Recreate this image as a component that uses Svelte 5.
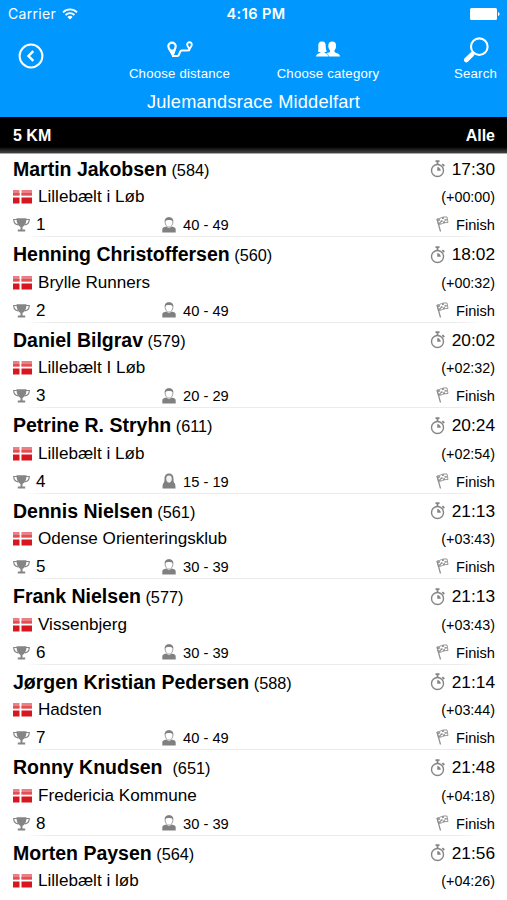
<script lang="ts">
  type Runner = {
    name: string
    bib: number
    club: string
    age?: string
    female?: boolean
    time: string
    gap: string
  }

  const runners: Runner[] = [
    { name: 'Martin Jakobsen', bib: 584, club: 'Lillebælt i Løb', age: '40 - 49', time: '17:30', gap: '+00:00' },
    { name: 'Henning Christoffersen', bib: 560, club: 'Brylle Runners', age: '40 - 49', time: '18:02', gap: '+00:32' },
    { name: 'Daniel Bilgrav', bib: 579, club: 'Lillebælt I Løb', age: '20 - 29', time: '20:02', gap: '+02:32' },
    { name: 'Petrine R. Stryhn', bib: 611, club: 'Lillebælt i Løb', age: '15 - 19', female: true, time: '20:24', gap: '+02:54' },
    { name: 'Dennis Nielsen', bib: 561, club: 'Odense Orienteringsklub', age: '30 - 39', time: '21:13', gap: '+03:43' },
    { name: 'Frank Nielsen', bib: 577, club: 'Vissenbjerg', age: '30 - 39', time: '21:13', gap: '+03:43' },
    { name: 'Jørgen Kristian Pedersen', bib: 588, club: 'Hadsten', age: '40 - 49', time: '21:14', gap: '+03:44' },
    { name: 'Ronny Knudsen ', bib: 651, club: 'Fredericia Kommune', age: '30 - 39', time: '21:48', gap: '+04:18' },
    { name: 'Morten Paysen', bib: 564, club: 'Lillebælt i løb', time: '21:56', gap: '+04:26' },
  ]
</script>

<div class="screen">
  <header>
    <div class="status">
      <div class="carrier">
        <span>Carrier</span>
        <svg width="16" height="12" viewBox="0 0 16 12" fill="none" stroke="#fff" stroke-width="1.8">
          <path d="M1 4.3a10 10 0 0 1 14 0M3.6 7a6.3 6.3 0 0 1 8.8 0" />
          <path d="M5.4 9a3.8 3.8 0 0 1 5.2 0L8 11.6z" fill="#fff" stroke="none" />
        </svg>
      </div>
      <div class="clock">4:16 PM</div>
      <svg class="battery" width="30" height="12" viewBox="0 0 30 12" fill="#fff">
        <rect width="27" height="12" rx="1.5" />
        <path d="M28 4q1.6.4 1.6 2T28 8z" />
      </svg>
    </div>
    <nav>
      <button class="back" aria-label="Back">
        <svg width="26" height="26" viewBox="0 0 26 26" fill="none" stroke="#fff" stroke-width="2">
          <circle cx="13" cy="13" r="11.4" />
          <path d="M15.3 8.2L10.5 13l4.8 4.8" stroke-width="2.4" />
        </svg>
      </button>
      <button class="distance">
        <svg width="26" height="17" viewBox="0 0 26 17" fill="none" stroke="#fff">
          <path d="M5 1.6a3.700 3.700 0 0 1 3.700 3.700c0 2.400-2.200 4.500-3.200 8C4.200 10.500 1.300 7.700 1.300 5.300A3.700 3.700 0 0 1 5 1.600z" stroke-width="2.200" />
          <path d="M2.500 9L6 15.700 8.200 9z" fill="#fff" />
          <path d="M5.500 15H10.500q1 0 1.500-1.400l1.200-3q.4-1 1.600-1H20.500q1.500 0 1.800-1.500" stroke-width="2" />
          <path d="M22.500 1.200a2.300 2.300 0 0 1 2.300 2.500c0 1.500-1.600 2.700-2.300 4.500-.7-1.800-2.300-3-2.300-4.500a2.300 2.300 0 0 1 2.300-2.500z" stroke-width="1.900" />
        </svg>
        <span>Choose distance</span>
      </button>
      <button class="category">
        <svg width="24" height="16" viewBox="0 0 24 16" fill="#fff">
          <path d="M16.300.5c2.700 0 4 1.700 3.800 4.600-.1 2.300-.9 3.300-1.600 4.200v1.500c0 1.400 5.500 1.300 5.500 4.700H12.800c-.2-1.900-1.200-2.700-2.400-3.200 1.700-.7 3.500-.8 3.500-1.500V9.300c-.8-.9-1.500-2-1.600-4.200C12.200 2.200 13.500.5 16.300.5z" />
          <path d="M6 .5c3 0 3.700 2 3.700 4.500 0 2 .3 4 1.100 5.500-.8.4-1.700.5-2.400.5 0 1.400 3.600 1.200 3.900 4.500H0c.3-3.300 4.500-3.300 4.500-4.600-.8 0-1.800-.1-2.600-.5C2.600 8.800 2.300 7 2.300 5 2.300 2.500 3 .5 6 .5z" />
        </svg>
        <span>Choose category</span>
      </button>
      <button class="search">
        <svg width="26" height="26" viewBox="0 0 26 26" fill="none" stroke="#fff">
          <circle cx="16.300" cy="9.700" r="8.300" stroke-width="2.100" />
          <path d="M10.500 15.800l-1.800 1.900" stroke-width="2" />
          <path d="M9 17.300L3.300 23" stroke-width="4.600" stroke-linecap="round" />
        </svg>
        <span>Search</span>
      </button>
    </nav>
    <h1>Julemandsrace Middelfart</h1>
  </header>

  <div class="section">
    <span>5 KM</span>
    <span>Alle</span>
  </div>

  <ul>
    {#each runners as runner, i}
      <li>
        <div class="line">
          <div class="name"><b>{runner.name}</b> <span>({runner.bib})</span></div>
          <svg class="watch" width="16" height="18" viewBox="0 0 16 18" fill="none" stroke="#858585">
            <circle cx="7.500" cy="10.500" r="6" stroke-width="1.400" />
            <path d="M5.500 1.200h4M7.500 1v3.500M12.300 4.200l2 1.800" stroke-width="1.800" />
            <path d="M7.500 10.500V7.300a3.500 3.500 0 0 1 3 3.200z" fill="#858585" stroke-width=".5" />
          </svg>
          <div class="time">{runner.time}</div>
        </div>
        <div class="line">
          <svg class="flag" width="19" height="14" viewBox="0 0 19 14">
            <path d="M0 0h6.500v5.500H0zM8.500 0H19v5.500H8.500z" fill="#ea7f84" />
            <path d="M0 3h6.500v2.500H0zM8.500 3H19v2.500H8.500z" fill="#e54e54" />
            <path d="M0 7.500h6.500v6H0zM8.500 7.500H19v6H8.500z" fill="#d7171f" />
          </svg>
          <div class="club">{runner.club}</div>
          <div class="gap">({runner.gap})</div>
        </div>
        {#if runner.age}
          <div class="line">
            <svg class="cup" width="17" height="14" viewBox="0 0 17 14" fill="#858585">
              <path d="M3.500.3h10C13.500 5 12 8 9.500 9v2.500h2.700v2H4.800v-2h2.700V9C5 8 3.500 5 3.500.3z" />
              <path d="M4 1.500H.7C.8 4.500 2.500 6.500 5 6.800M13 1.500h3.300C16.200 4.500 14.500 6.500 12 6.800" fill="none" stroke="#858585" stroke-width="1.200" />
            </svg>
            <div class="place">{i + 1}</div>
            <svg class="person" width="14" height="16" viewBox="0 0 14 16" fill="#808080">
              {#if runner.female}
                <path d="M7 .5c3.300 0 4.500 2.400 4.500 5.500 0 2 .3 3 .8 4 1 .6 1.200 2 1.200 5.500H.5c0-3.500.2-4.900 1.200-5.500.5-1 .8-2 .8-4C2.500 2.900 3.700.5 7 .5z" />
                <path d="M7 2.500c1.900 0 2.800 1.200 2.800 3.300S8.700 9.700 7 9.700 4.200 7.900 4.200 5.800 5.100 2.500 7 2.500z" fill="#f2f2f2" />
              {:else}
                <path d="M.3 15.500v-2.900c0-2.100 1.400-2.400 4-3.100L7 11.300l2.700-1.800c2.600.7 4 1 4 3.100v2.900z" />
                <path d="M3.100 5C3.100 2.400 4.700.8 7 .8s3.900 1.600 3.900 4.200S9.200 10.200 7 10.200 3.100 7.600 3.100 5z" fill="#fff" stroke="#a0a0a0" />
                <path d="M2.700 4.500C2.500 1.700 4.300.2 7 .2s4.500 1.500 4.300 4.300C10 3.200 8.500 2.900 7 2.900s-3 .3-4.300 1.600z" />
              {/if}
            </svg>
            <div class="age">{runner.age}</div>
            <svg class="finish" width="13" height="16" viewBox="0 0 13 16" fill="none" stroke="#8c8c8c">
              <path d="M1 3l3.500 12.500" stroke-width="1.200" />
              <path d="M1 3c3 0 5-2.800 10-2l1 5.500c-4.500-.5-6.500 2.300-9.500 2z" stroke-width=".9" />
              <path d="M2 4.300l2-.6M6 2.500l2-.7M4.500 5.700l2-.9M8.500 3.900l2.300-.2M3 7.300l2-.5M7 6.500l2-.8" stroke-width="1.500" />
            </svg>
            <div class="done">Finish</div>
          </div>
        {/if}
      </li>
    {/each}
  </ul>
</div>

<style>
  :global(body) {
    background: #fff;
  }
  .screen {
    width: 507px;
    height: 900px;
    overflow: hidden;
    background: #fff;
    color: #000;
    font-family: 'Liberation Sans', Arial, sans-serif;
  }
  header {
    height: 117px;
    background: #0098ff;
    color: #fff;
  }
  .status {
    display: grid;
    grid-template-columns: 1fr auto 1fr;
    align-items: center;
    height: 27px;
    padding: 0 7px 0 8px;
    font-family: Inter, sans-serif;
    font-size: 14px;
  }
  .carrier {
    display: flex;
    align-items: center;
    gap: 6px;
    letter-spacing: 0.3px;
  }
  .clock {
    margin-left: 4px;
    font-weight: 600;
    font-size: 14.5px;
    letter-spacing: 0.4px;
  }
  .battery {
    justify-self: end;
  }
  nav {
    display: grid;
    grid-template-columns: 106px 147px 150px 104px;
    height: 60px;
  }
  button {
    display: flex;
    flex-direction: column;
    align-items: center;
    justify-content: space-between;
    padding: 0 0 5px;
    border: 0;
    background: none;
    color: #fff;
    font: 13.2px/16px 'Liberation Sans', Arial, sans-serif;
    letter-spacing: 0.2px;
    white-space: nowrap;
  }
  .back {
    align-items: flex-start;
    justify-content: flex-start;
    padding: 16px 0 0 18px;
  }
  .distance,
  .category {
    padding-top: 14px;
  }
  .search {
    align-items: flex-end;
    padding-top: 10px;
    padding-right: 10px;
  }
  .search svg {
    margin-right: 8px;
  }
  h1 {
    margin: 0;
    font-size: 18.2px;
    font-weight: 400;
    letter-spacing: 0.2px;
    line-height: 31px;
    text-align: center;
  }
  .section {
    display: flex;
    justify-content: space-between;
    box-sizing: border-box;
    height: 37px;
    padding: 0 12px 0 13px;
    background: linear-gradient(#000 30px, #3c3c3c 35px, #3c3c3c 36px, #aaa 36px);
    color: #fff;
    font-size: 16px;
    font-weight: 700;
    line-height: 38px;
  }
  ul {
    margin: 0;
    padding: 0;
    list-style: none;
  }
  li {
    box-sizing: border-box;
    height: 85.5px;
    padding: 1px 12px 0 13px;
    background: linear-gradient(90deg, #fff, #ebebeb 5%, #ebebeb 95%, #fff) 25px 82px / 456px 1px no-repeat;
  }
  li:last-child {
    height: auto;
    background: none;
  }
  .line {
    display: flex;
    align-items: center;
    height: 28.2px;
    white-space: nowrap;
  }
  .name {
    flex: 1;
    font-size: 16.3px;
    white-space: pre;
  }
  .name b {
    font-size: 19.5px;
  }
  .watch {
    margin-right: 6px;
  }
  .time {
    font-size: 17.3px;
  }
  .flag {
    margin-right: 6px;
  }
  .club {
    flex: 1;
    font-size: 17.1px;
  }
  .gap {
    font-size: 14.3px;
  }
  .cup {
    margin-right: 6px;
  }
  .place {
    width: 126px;
    font-size: 17px;
  }
  .person {
    margin: 0 7px 1px 0;
  }
  .age {
    flex: 1;
    font-size: 14.7px;
  }
  .finish {
    margin: 0 7px 2px 0;
  }
  .done {
    font-size: 14.6px;
  }
</style>
